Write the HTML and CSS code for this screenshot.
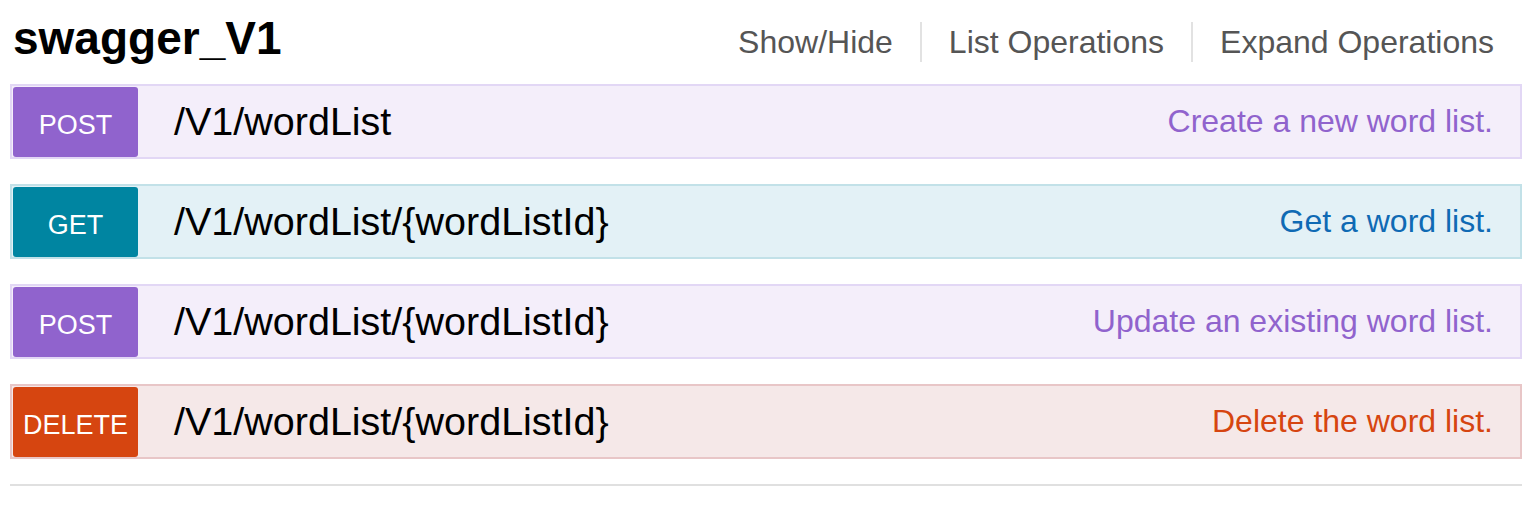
FILE: index.html
```html
<!DOCTYPE html>
<html>
<head>
<meta charset="utf-8">
<link rel="stylesheet" href="styles.css">
</head>
<body>
<div class="page">
  <div class="header">
    <h2 class="title">swagger_V1</h2>
    <ul class="nav">
      <li class="nav-item">Show/Hide</li>
      <li class="nav-item">List Operations</li>
      <li class="nav-item">Expand Operations</li>
    </ul>
  </div>
  <ul class="ops">
    <li class="op op-post">
      <span class="method">POST</span>
      <span class="path">/V1/wordList</span>
      <span class="desc">Create a new word list.</span>
    </li>
    <li class="op op-get">
      <span class="method">GET</span>
      <span class="path">/V1/wordList/{wordListId}</span>
      <span class="desc">Get a word list.</span>
    </li>
    <li class="op op-post">
      <span class="method">POST</span>
      <span class="path">/V1/wordList/{wordListId}</span>
      <span class="desc">Update an existing word list.</span>
    </li>
    <li class="op op-delete">
      <span class="method">DELETE</span>
      <span class="path">/V1/wordList/{wordListId}</span>
      <span class="desc">Delete the word list.</span>
    </li>
  </ul>
  <div class="rule"></div>
</div>
</body>
</html>
```

FILE: styles.css
```css
html, body {
  margin: 0;
  padding: 0;
  background: #ffffff;
}
body {
  font-family: "Liberation Sans", Arial, sans-serif;
  color: #000;
}
.page {
  padding: 0 17px 0 10px;
}
.header {
  display: flex;
  justify-content: space-between;
  align-items: center;
  height: 84px;
}
.title {
  margin: 0 0 8px 3px;
  font-size: 46px;
  font-weight: bold;
  line-height: 1;
  color: #000;
}
.nav {
  list-style: none;
  margin: 0;
  padding: 0;
  display: flex;
  align-items: center;
}
.nav-item {
  font-size: 32px;
  color: #555555;
  padding: 0 27px;
  line-height: 40px;
  border-left: 2px solid #e2e2e2;
}
.nav-item:first-child {
  border-left: none;
}
.nav-item:last-child {
  padding-right: 28px;
}
.ops {
  list-style: none;
  margin: 0;
  padding: 0;
  display: flex;
  flex-direction: column;
  gap: 25px;
}
.op {
  display: flex;
  align-items: center;
  height: 75px;
  box-sizing: border-box;
  border: 2px solid;
  padding: 1px;
}
.method {
  flex: none;
  width: 125px;
  height: 70px;
  border-radius: 3px;
  color: #ffffff;
  font-size: 27px;
  display: flex;
  align-items: center;
  justify-content: center;
  padding-top: 7px;
  box-sizing: border-box;
}
.path {
  font-size: 39.5px;
  margin-left: 36px;
  color: #000;
}
.desc {
  margin-left: auto;
  margin-right: 26px;
  font-size: 32px;
}
.op-post {
  background: #f4eefa;
  border-color: #e2d7f5;
}
.op-post .method {
  background: #9063cd;
}
.op-post .desc {
  color: #9063cd;
}
.op-get {
  background: #e3f1f6;
  border-color: #c2e1e8;
}
.op-get .method {
  background: #0085a1;
}
.op-get .desc {
  color: #0f6ab4;
}
.op-delete {
  background: #f5e8e8;
  border-color: #e8c6c7;
}
.op-delete .method {
  background: #d64510;
}
.op-delete .desc {
  color: #d64510;
}
.rule {
  margin-top: 25px;
  height: 2px;
  background: #e0e0e0;
}
```
